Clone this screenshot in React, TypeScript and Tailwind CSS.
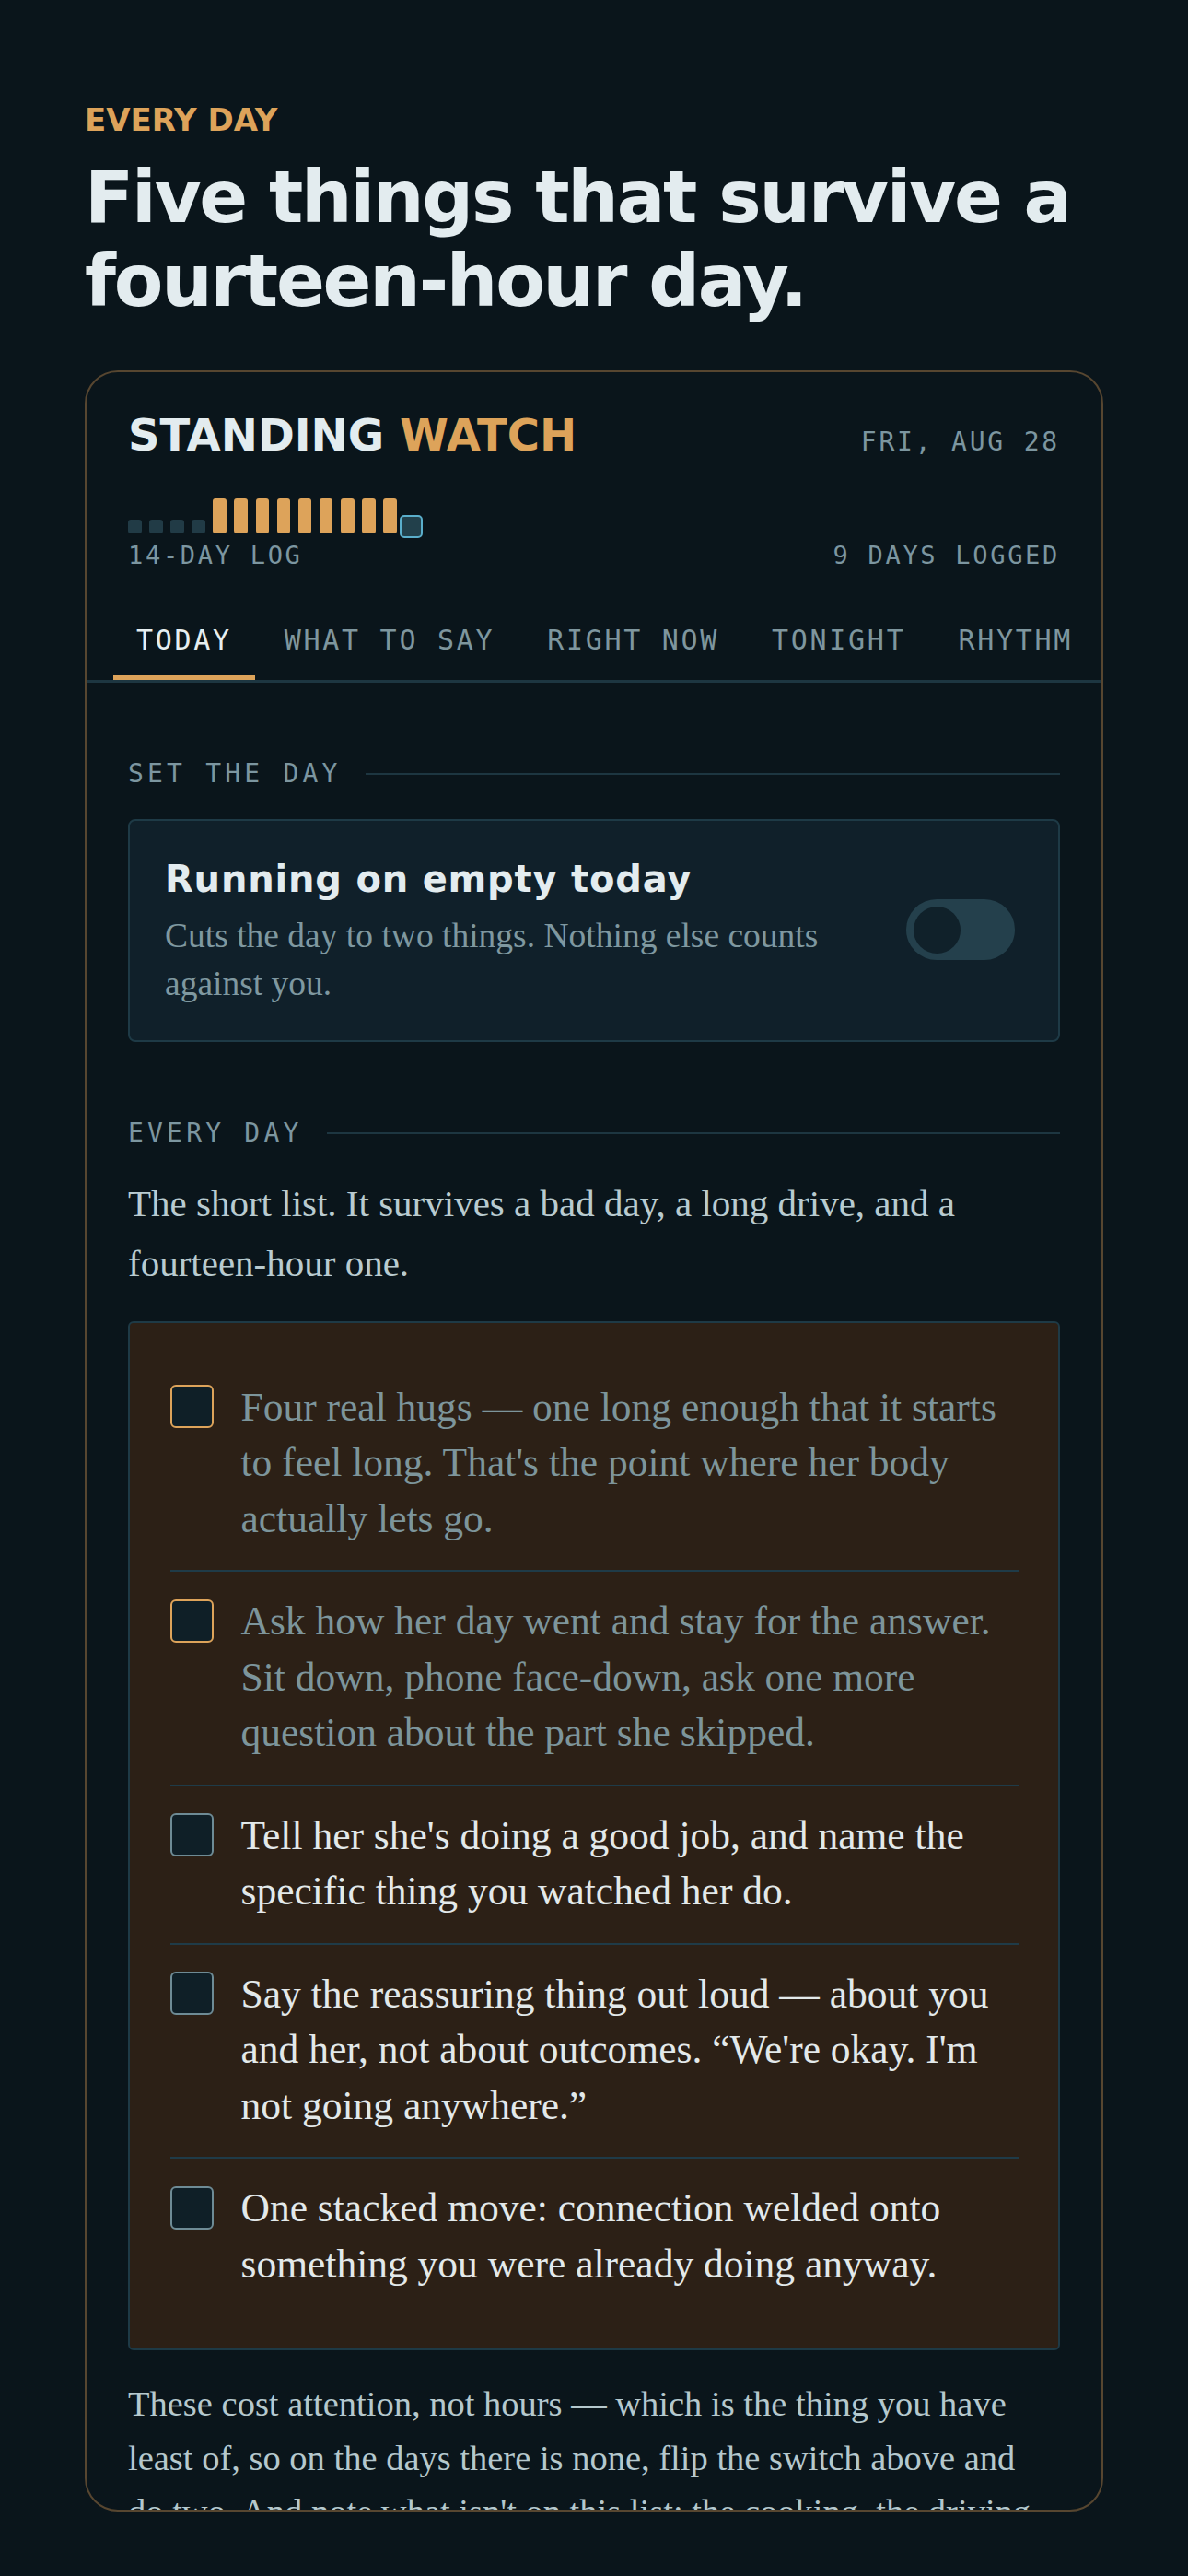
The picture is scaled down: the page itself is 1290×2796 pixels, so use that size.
import React from "react";

const items = [
  {
    text: "Four real hugs — one long enough that it starts to feel long. That's the point where her body actually lets go.",
    hot: true,
  },
  {
    text: "Ask how her day went and stay for the answer. Sit down, phone face-down, ask one more question about the part she skipped.",
    hot: true,
  },
  {
    text: "Tell her she's doing a good job, and name the specific thing you watched her do.",
    hot: false,
  },
  {
    text: "Say the reassuring thing out loud — about you and her, not about outcomes. “We're okay. I'm not going anywhere.”",
    hot: false,
  },
  {
    text: "One stacked move: connection welded onto something you were already doing anyway.",
    hot: false,
  },
];

// 0 = missed, 1 = logged, 2 = today
const log = [0, 0, 0, 0, 1, 1, 1, 1, 1, 1, 1, 1, 1, 2];

const tabs = ["Today", "What to say", "Right now", "Tonight", "Rhythm"];

function LogBars() {
  return (
    <div className="mt-[45px] flex h-[38px] items-end gap-[8.5px]">
      {log.map((d, i) =>
        d === 1 ? (
          <span key={i} className="h-[38px] w-[14.6px] rounded-[3px] bg-[#dda35a]" />
        ) : d === 2 ? (
          <span key={i} className="relative h-[15px] w-[14.6px]">
            <span className="absolute -inset-[5px] rounded-[5px] border-[2.5px] border-[#5aaecb] bg-[#22404b]" />
          </span>
        ) : (
          <span key={i} className="h-[15px] w-[14.6px] rounded-[3px] bg-[#213b46]" />
        ),
      )}
    </div>
  );
}

function SectionLabel({ children }: { children: React.ReactNode }) {
  return (
    <div className="flex items-center gap-[26px]">
      <span className="font-['DejaVu_Sans_Mono',monospace] text-[28px] leading-none tracking-[0.15em] text-[#7c96a0]">
        {children}
      </span>
      <span className="h-[2px] flex-1 bg-[#1d3641]" />
    </div>
  );
}

function Toggle() {
  return (
    <div className="mt-[35px] flex items-center gap-[48px] rounded-[8px] border-2 border-[#1e3a46] bg-[#10202a] pt-[39px] pb-[35px] pl-[38px] pr-[47px]">
      <div className="flex-1">
        <h3 className="font-['DejaVu_Sans',sans-serif] text-[40px] leading-[48px] font-bold tracking-[0.02em] text-[#e3ecef]">
          Running on empty today
        </h3>
        <p className="mt-[12px] font-['Liberation_Serif',serif] text-[37.5px] leading-[52px] text-[#7f98a0]">
          Cuts the day to two things. Nothing else counts against you.
        </p>
      </div>
      <div className="-mt-[6px] flex h-[66px] w-[118px] shrink-0 items-center rounded-full bg-[#24404c] px-[7.5px]">
        <span className="size-[51px] rounded-full bg-[#10212a]" />
      </div>
    </div>
  );
}

function Checklist() {
  return (
    <ul className="mt-[30px] rounded-[6px] border-2 border-[#1e3a46] bg-[#2c2016] px-[43.5px] pt-[38px] pb-[36px]">
      {items.map((it, i) => (
        <li
          key={i}
          className={`flex gap-[30px] pt-[23px] pb-[26px] ${i > 0 ? "border-t-2 border-[#1f3b48]" : ""}`}
        >
          <span
            className={`mt-[6.5px] size-[47px] shrink-0 rounded-[6px] border-2 bg-[#0f1f27] ${
              it.hot ? "border-[#dda35a]" : "border-[#6e8b95]"
            }`}
          />
          <p
            className={`font-['Liberation_Serif',serif] text-[43.5px] leading-[60.5px] ${
              it.hot ? "text-[#7d959b]" : "text-[#e3e9ea]"
            }`}
          >
            {it.text}
          </p>
        </li>
      ))}
    </ul>
  );
}

export default function App() {
  return (
    <div className="min-h-screen bg-[#0a151b] px-[92px] pt-[113px]">
      <p className="font-['DejaVu_Sans',sans-serif] text-[34px] leading-none font-bold text-[#dda35a]">
        EVERY DAY
      </p>
      <h1 className="mt-[22px] font-['DejaVu_Sans',sans-serif] text-[78px] leading-[91px] font-bold tracking-[-0.028em] text-[#e3ecef]">
        Five things that survive a fourteen-hour day.
      </h1>

      <div className="mt-[51px] h-[2324px] overflow-hidden rounded-[36px] border-2 border-[#574630]">
        <header className="px-[45px] pt-[44px]">
          <div className="flex items-baseline justify-between">
            <h2 className="font-['DejaVu_Sans',sans-serif] text-[48px] leading-none font-bold text-[#e3ecef]">
              STANDING <span className="text-[#dda35a]">WATCH</span>
            </h2>
            <span className="font-['DejaVu_Sans_Mono',monospace] text-[28px] leading-none tracking-[0.1em] text-[#7c96a0]">
              FRI, AUG 28
            </span>
          </div>
          <LogBars />
          <div className="mt-[10px] flex justify-between font-['DejaVu_Sans_Mono',monospace] text-[27px] leading-none tracking-[0.1em] text-[#7c96a0]">
            <span>14-DAY LOG</span>
            <span>9 DAYS LOGGED</span>
          </div>
        </header>

        <nav className="mt-[64px] flex gap-[7px] border-b-[3px] border-[#1d3641] pl-[29px]">
          {tabs.map((t, i) => (
            <div
              key={t}
              className={`whitespace-nowrap border-b-[5px] px-[25px] pb-[23px] font-['DejaVu_Sans_Mono',monospace] text-[30px] leading-none uppercase tracking-[0.09em] ${
                i === 0 ? "border-[#dda35a] text-[#e6eef0]" : "border-transparent text-[#7e969e]"
              }`}
            >
              {t}
            </div>
          ))}
        </nav>

        <main className="px-[45px] pt-[85px]">
          <SectionLabel>SET THE DAY</SectionLabel>
          <Toggle />

          <div className="mt-[85px]">
            <SectionLabel>EVERY DAY</SectionLabel>
          </div>
          <p className="mt-[29.5px] font-['Liberation_Serif',serif] text-[41px] leading-[65px] text-[#b9cbd0]">
            The short list. It survives a bad day, a long drive, and a fourteen-hour one.
          </p>
          <Checklist />
          <p className="mt-[29px] pr-[20px] font-['Liberation_Serif',serif] text-[38.5px] leading-[58.5px] text-[#b5c8cd]">
            These cost attention, not hours — which is the thing you have least of, so on the days there
            is none, flip the switch above and do two. And note what isn't on this list: the cooking, the
            driving, the errands. Those count too, but they don't count here.
          </p>
        </main>
      </div>
    </div>
  );
}
